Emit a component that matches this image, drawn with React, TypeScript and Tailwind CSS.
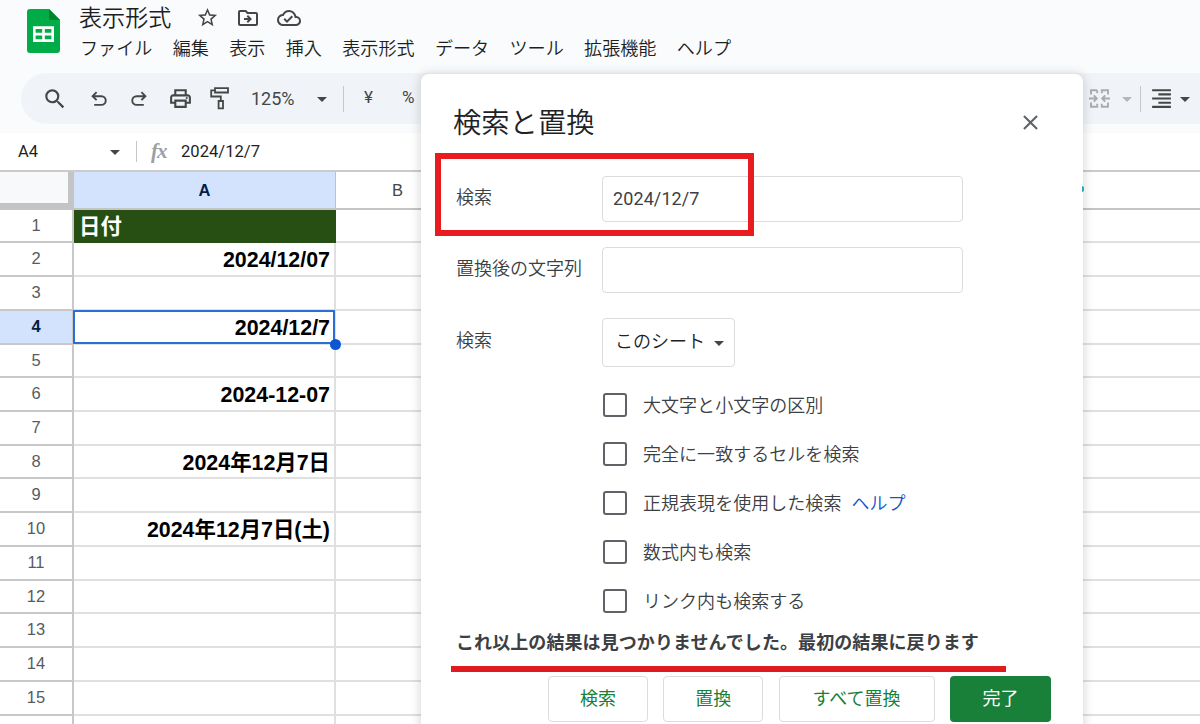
import {
  MdArrowDropDown,
  MdClose,
  MdFormatAlignRight,
  MdOutlineCloudDone,
  MdOutlineDriveFileMove,
  MdOutlinePrint,
  MdSearch,
  MdStarBorder,
} from 'react-icons/md'

const menus = ['ファイル', '編集', '表示', '挿入', '表示形式', 'データ', 'ツール', '拡張機能', 'ヘルプ']

const rows = [
  { number: 1, value: '日付' },
  { number: 2, value: '2024/12/07' },
  { number: 3, value: '' },
  { number: 4, value: '2024/12/7' },
  { number: 5, value: '' },
  { number: 6, value: '2024-12-07' },
  { number: 7, value: '' },
  { number: 8, value: '2024年12月7日' },
  { number: 9, value: '' },
  { number: 10, value: '2024年12月7日(土)' },
  { number: 11, value: '' },
  { number: 12, value: '' },
  { number: 13, value: '' },
  { number: 14, value: '' },
  { number: 15, value: '' },
]

const options = [
  { label: '大文字と小文字の区別' },
  { label: '完全に一致するセルを検索' },
  { label: '正規表現を使用した検索', help: 'ヘルプ' },
  { label: '数式内も検索' },
  { label: 'リンク内も検索する' },
]

function SheetsLogo() {
  return (
    <svg width="33" height="44" viewBox="0 0 33 44" className="shrink-0">
      <path d="M3 0h19l11 11v30a3 3 0 0 1-3 3H3a3 3 0 0 1-3-3V3a3 3 0 0 1 3-3z" fill="#00ac47" />
      <path d="M22 0l11 11H22z" fill="#00832d" />
      <path
        fillRule="evenodd"
        fill="#fff"
        d="M6 17.3h21v15.7H6zM8.6 20v3.7h6.6V20zM17.8 20v3.7h6.6V20zM8.6 26.4v3.9h6.6v-3.9zM17.8 26.4v3.9h6.6v-3.9z"
      />
    </svg>
  )
}

function UndoIcon({ className }: { className?: string }) {
  return (
    <svg width="16" height="16" viewBox="0 0 16 16" fill="none" stroke="#444746" strokeWidth="1.9" className={className}>
      <path d="M5.6 1.2L1.6 5.2l4 4M1.8 5.2h8.6a4.3 4.3 0 0 1 0 8.7H3.2" />
    </svg>
  )
}

function PaintIcon() {
  return (
    <svg width="20" height="23" viewBox="0 0 20 23" fill="none" stroke="#444746" strokeWidth="1.8">
      <path d="M5 1.2h13v4.3H5zM5 3.3H1.2v6.2h9.6v4.4M8.6 14h4.4v7.4H8.6z" />
    </svg>
  )
}

function MergeIcon() {
  return (
    <svg width="21" height="19" viewBox="0 0 21 19" fill="none" stroke="#a9abad" strokeWidth="1.9">
      <path d="M8.2 1.2H2v4.3M8.2 1.2v3M2 13.5v4.3h6.2v-3M12.8 4.2v-3H19v4.3M12.8 14.8v3H19v-4.3" />
      <path d="M0 9.5h7.5M4.8 6.4l3 3.1-3 3.1M21 9.5h-7.5M16.2 6.4l-3 3.1 3 3.1" />
    </svg>
  )
}

function Header() {
  return (
    <header className="h-[73px] flex pl-[27px] pt-[9px]">
      <SheetsLogo />
      <div className="ml-[19px]">
        <div className="h-[17px] flex items-center text-[#444746]">
          <span className="-mt-[3px] text-[23.1px] leading-7 text-[#1f1f1f] font-[350] w-[93px] whitespace-nowrap">表示形式</span>
          <MdStarBorder className="ml-[24px] w-[23px] h-[23px]" />
          <MdOutlineDriveFileMove className="ml-[17px] w-6 h-6" />
          <MdOutlineCloudDone className="ml-[17px] w-6 h-6" />
        </div>
        <nav className="mt-[8px] flex gap-[20.3px] text-[18.1px] leading-[27px] font-[350] text-[#1f1f1f] pl-px">
          {menus.map((menu) => (
            <span key={menu} className="whitespace-nowrap">{menu}</span>
          ))}
        </nav>
      </div>
    </header>
  )
}

function Toolbar() {
  return (
    <div className="ml-[21px] h-[51px] rounded-l-full bg-[#f0f4f9] flex items-center text-[#444746] font-[Roboto,'Noto_Sans_CJK_JP',sans-serif]">
      <MdSearch className="ml-[21px] w-[26px] h-[26px]" />
      <UndoIcon className="ml-[23px] mt-px" />
      <UndoIcon className="ml-6 mt-px -scale-x-100" />
      <MdOutlinePrint className="ml-[21px] w-[25px] h-[25px]" />
      <div className="ml-[17px]"><PaintIcon /></div>
      <span className="ml-[21px] w-[45px] text-[18px]">125%</span>
      <MdArrowDropDown className="ml-[14px] w-6 h-6" />
      <div className="ml-[9px] w-px h-[26px] bg-[#c7c7c7]" />
      <span className="ml-[20px] -mt-0.5 text-[17px]">¥</span>
      <span className="ml-[29px] -mt-0.5 text-[17px]">%</span>
      <div className="ml-auto mr-[3px] flex items-center">
        <MergeIcon />
        <MdArrowDropDown className="ml-[5px] w-6 h-6 text-[#b4b6b8]" />
        <div className="ml-px w-px h-[26px] bg-[#c7c7c7]" />
        <MdFormatAlignRight className="ml-[8px] w-[25px] h-[25px]" />
        <MdArrowDropDown className="-ml-px w-6 h-6" />
      </div>
    </div>
  )
}

function FormulaBar() {
  return (
    <div className="mt-[9px] h-[37px] bg-white flex items-center pl-[18px] text-[#1f1f1f] font-[Roboto,sans-serif]">
      <span className="w-[85px] pt-0.5 text-[16.5px]">A4</span>
      <MdArrowDropDown className="w-6 h-6 text-[#444746]" />
      <div className="ml-[9px] w-px h-[21px] bg-[#c7c7c7]" />
      <span className="ml-[14px] w-[30px] text-[21px] leading-none italic font-bold tracking-[-1px] text-[#9aa0a6] font-['Liberation_Serif',serif]">fx</span>
      <span className="pt-px text-[16.6px]">2024/12/7</span>
    </div>
  )
}

function Sheet() {
  return (
    <div className="bg-white border-t-2 border-[#cbcbcb] font-['Liberation_Sans','Noto_Sans_CJK_JP',sans-serif]">
      <div className="h-[37.6px] flex border-b-2 border-[#c4c4c4] text-[16.5px] text-[#444746] leading-[37px] text-center">
        <div className="w-[74px] bg-[#f8f9fa] border-r-[6px] border-b-[5px] border-[#c4c4c4]" />
        <div className="w-[262px] bg-[#d3e3fd] border-r border-[#c0c0c0] font-bold text-[#041e49]">A</div>
        <div className="w-[123px]">B</div>
      </div>
      {rows.map((row) => {
        const active = row.number === 4
        const heading = row.number === 1
        return (
          <div key={row.number} className="h-[33.74px] flex">
            <div
              className={`w-[74px] border-r-2 border-b-2 border-[#c8c8c8] text-center text-[16.5px] leading-[30px] ${
                active ? 'bg-[#d3e3fd] font-bold text-[#041e49]' : 'text-[#575b5f]'
              }`}
            >
              {row.number}
            </div>
            <div
              className={`relative w-[262px] border-r-2 border-b-2 text-[21.4px] leading-[35.6px] font-bold whitespace-nowrap ${
                heading
                  ? 'bg-[#274e13] border-[#274e13] text-white pl-[5px]'
                  : 'border-[#e0e0e0] text-black text-right pr-[4px]'
              }`}
            >
              {row.value}
              {active && (
                <>
                  <div className="absolute -left-px -top-px -right-px -bottom-px border-2 border-[#2a70d2]" />
                  <div className="absolute z-10 -right-[7px] -bottom-[7px] w-[11px] h-[11px] rounded-full bg-[#0b57d0]" />
                </>
              )}
            </div>
            <div className="flex-1 border-b-2 border-[#e0e0e0]" />
          </div>
        )
      })}
      {/* top of the next row */}
      <div className="h-5 flex">
        <div className="w-[74px] border-r-2 border-[#c8c8c8]" />
        <div className="w-[262px] border-r-2 border-[#e0e0e0]" />
      </div>
    </div>
  )
}

function FindReplaceDialog() {
  return (
    <div className="absolute z-20 left-[421px] top-[74px] w-[662px] h-[680px] rounded-lg bg-white shadow-[0_1px_10px_2px_rgba(60,64,67,0.18)] pl-[34px] text-[18px] text-[#3c4043] font-[350]">
      <div className="h-[102px] flex items-center pr-[40px] pb-[6px]">
        <h2 className="text-[28.3px] leading-none text-[#202124] -ml-0.5 -mt-px">検索と置換</h2>
        <MdClose className="ml-auto w-[25px] h-[25px] text-[#5f6368]" />
      </div>

      <div className="flex items-center h-[46px]">
        <label className="w-[147px] pl-px -mt-1.5">検索</label>
        <div className="w-[361px] h-[46px] rounded border border-[#dadce0] px-[10px] leading-[44px] font-normal font-[Roboto,sans-serif] tracking-[0.1px]">
          2024/12/7
        </div>
      </div>
      <div className="mt-[25px] flex items-center h-[46px]">
        <label className="w-[147px] pl-px -mt-1.5">置換後の文字列</label>
        <div className="w-[361px] h-[46px] rounded border border-[#dadce0]" />
      </div>
      <div className="mt-[25px] flex items-center h-[49px]">
        <label className="w-[147px] pl-px -mt-1.5">検索</label>
        <div className="w-[133px] h-[49px] rounded border border-[#dadce0] flex items-center pl-[12px] text-[#202124]">
          <span className="w-[92px] -mt-1">このシート</span>
          <MdArrowDropDown className="w-6 h-6 text-[#444746]" />
        </div>
      </div>

      <div className="mt-[13px] ml-[148px]">
        {options.map((option) => (
          <div key={option.label} className="h-[49px] flex items-center">
            <span className="w-6 h-6 rounded-[3px] border-2 border-[#5f6368]" />
            <span className="ml-[16px] tracking-[0.04px]">{option.label}</span>
            {option.help && <a href="#" className="ml-[10px] text-[#1155cc]">{option.help}</a>}
          </div>
        ))}
      </div>

      <p className="mt-[3px] pl-px leading-[26px] font-bold whitespace-nowrap tracking-[0.08px]">
        これ以上の結果は見つかりませんでした。最初の結果に戻ります
      </p>

      <div className="mt-[22px] ml-[93px] flex gap-[15.3px] leading-[38px] text-center text-[#188038] font-normal">
        <button className="w-[100px] h-[46px] pb-1 rounded border border-[#dadce0]">検索</button>
        <button className="w-[100px] h-[46px] pb-1 rounded border border-[#dadce0]">置換</button>
        <button className="w-[156px] h-[46px] pb-1 rounded border border-[#dadce0]">すべて置換</button>
        <button className="w-[101px] h-[46px] pb-1 rounded bg-[#188038] text-white">完了</button>
      </div>
    </div>
  )
}

export default function App() {
  return (
    <div className="relative w-[1200px] h-[724px] overflow-hidden bg-[#f9fbfd] font-['Noto_Sans_CJK_JP',sans-serif]">
      <Header />
      <Toolbar />
      <FormulaBar />
      <Sheet />
      <FindReplaceDialog />

      {/* collaborator marker peeking out beside the dialog */}
      <div className="absolute z-20 left-[1082px] top-[186px] w-[2px] h-[6px] rounded-r-full bg-[#2ba3b5]" />

      {/* red annotations */}
      <div className="absolute z-30 left-[435px] top-[153px] w-[319px] h-[83px] border-[6px] border-[#e81c1f]" />
      <div className="absolute z-30 left-[451px] top-[666px] w-[555px] h-[6px] bg-[#e01b1f]" />
    </div>
  )
}
